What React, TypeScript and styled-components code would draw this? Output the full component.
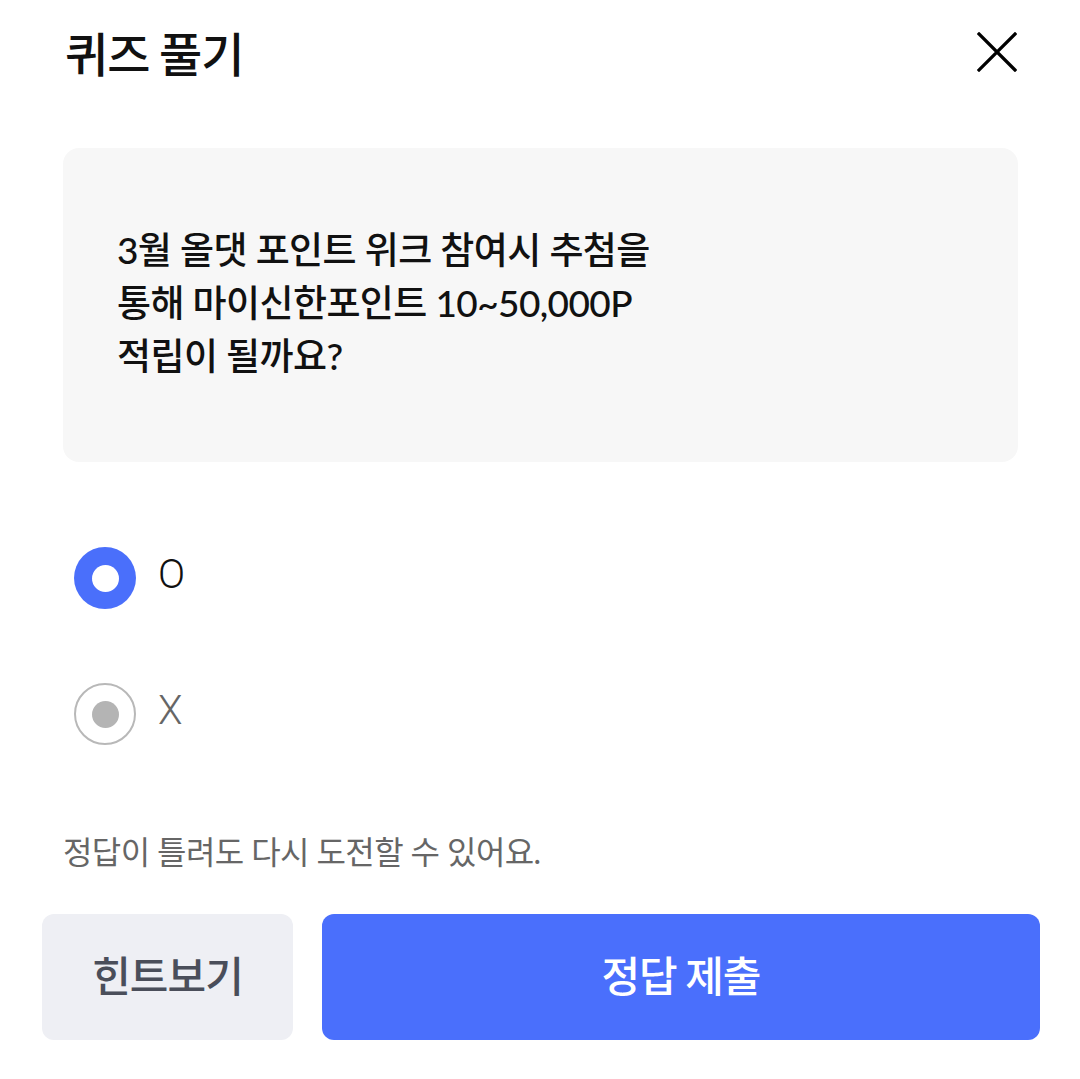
import styled, { createGlobalStyle } from "styled-components";

const GlobalStyle = createGlobalStyle`
  body {
    margin: 0;
    background: #ffffff;
    font-family: "Lato", "Noto Sans CJK KR", sans-serif;
  }
`;

const options = [
  { label: "O", checked: true },
  { label: "X", checked: false },
];

function App() {
  return (
    <>
      <GlobalStyle />
      <Sheet>
        <Header>
          <Title>퀴즈 풀기</Title>
          <CloseButton aria-label="닫기">
            <svg width="40" height="40" viewBox="0 0 40 40">
              <path d="M2 2 L38 38 M38 2 L2 38" stroke="#000" strokeWidth="3.2" strokeLinecap="square" />
            </svg>
          </CloseButton>
        </Header>
        <QuestionBox>
          <Question>
            3월 올댓 포인트 위크 참여시 추첨을
            <br />
            통해 마이신한포인트 10~50,000P
            <br />
            적립이 될까요?
          </Question>
        </QuestionBox>
        <Options>
          {options.map((o) => (
            <OptionRow key={o.label}>
              <Radio $checked={o.checked} />
              <OptionLabel $checked={o.checked}>{o.label}</OptionLabel>
            </OptionRow>
          ))}
        </Options>
        <Notice>정답이 틀려도 다시 도전할 수 있어요.</Notice>
        <ButtonRow>
          <HintButton>힌트보기</HintButton>
          <SubmitButton>정답 제출</SubmitButton>
        </ButtonRow>
      </Sheet>
    </>
  );
}

const Sheet = styled.div`
  padding: 0 62px 0 63px;
  display: flex;
  flex-direction: column;
`;

const Header = styled.div`
  height: 104px;
  display: flex;
  align-items: center;
  justify-content: space-between;
`;

const Title = styled.h1`
  margin: 0 0 2px 2px;
  font-family: "Noto Sans CJK KR", sans-serif;
  font-size: 47px;
  font-weight: 500;
  letter-spacing: -1px;
  color: #111;
`;

const CloseButton = styled.button`
  border: 0;
  background: none;
  padding: 0;
  margin-right: 1px;
  display: flex;
  svg {
    display: block;
  }
`;

const QuestionBox = styled.div`
  margin-top: 44px;
  height: 314px;
  background: #f7f7f7;
  border-radius: 16px;
  padding-left: 54px;
  display: flex;
  align-items: center;
  box-sizing: border-box;
`;

const Question = styled.p`
  margin: 0 0 6px;
  font-family: "Lato", "Noto Sans CJK KR", sans-serif;
  font-size: 37px;
  font-weight: 500;
  line-height: 53px;
  letter-spacing: -0.6px;
  color: #111;
`;

const Options = styled.div`
  margin-top: 85px;
  display: flex;
  flex-direction: column;
  gap: 74px;
`;

const OptionRow = styled.label`
  display: flex;
  align-items: center;
  gap: 22px;
  margin-left: 11px;
`;

const Radio = styled.span<{ $checked: boolean }>`
  width: 62px;
  height: 62px;
  border-radius: 50%;
  box-sizing: border-box;
  display: flex;
  align-items: center;
  justify-content: center;
  background: ${(p) => (p.$checked ? "#4a6ffb" : "#fff")};
  border: ${(p) => (p.$checked ? "none" : "2px solid #b8b8b8")};
  &::after {
    content: "";
    width: 27px;
    height: 27px;
    border-radius: 50%;
    background: ${(p) => (p.$checked ? "#fff" : "#b4b4b4")};
  }
`;

const OptionLabel = styled.span<{ $checked: boolean }>`
  font-family: "Roboto", sans-serif;
  font-weight: 300;
  font-size: 40px;
  margin-top: -8px;
  color: ${(p) => (p.$checked ? "#111" : "#666")};
`;

const Notice = styled.p`
  margin: 82px 0 0;
  font-family: "Lato", "Noto Sans CJK KR", sans-serif;
  font-size: 32px;
  letter-spacing: -0.6px;
  color: #666;
`;

const ButtonRow = styled.div`
  margin: 41px -22px 0 -21px;
  display: flex;
  gap: 29px;
`;

const BaseButton = styled.button`
  height: 126px;
  border: 0;
  border-radius: 12px;
  padding-bottom: 8px;
  font-family: "Noto Sans CJK KR", sans-serif;
  font-size: 42px;
  font-weight: 500;
  letter-spacing: -1px;
`;

const HintButton = styled(BaseButton)`
  width: 251px;
  background: #eeeff4;
  color: #4a4e5a;
`;

const SubmitButton = styled(BaseButton)`
  flex: 1;
  background: #4a6ffc;
  color: #fff;
`;

export default App;
